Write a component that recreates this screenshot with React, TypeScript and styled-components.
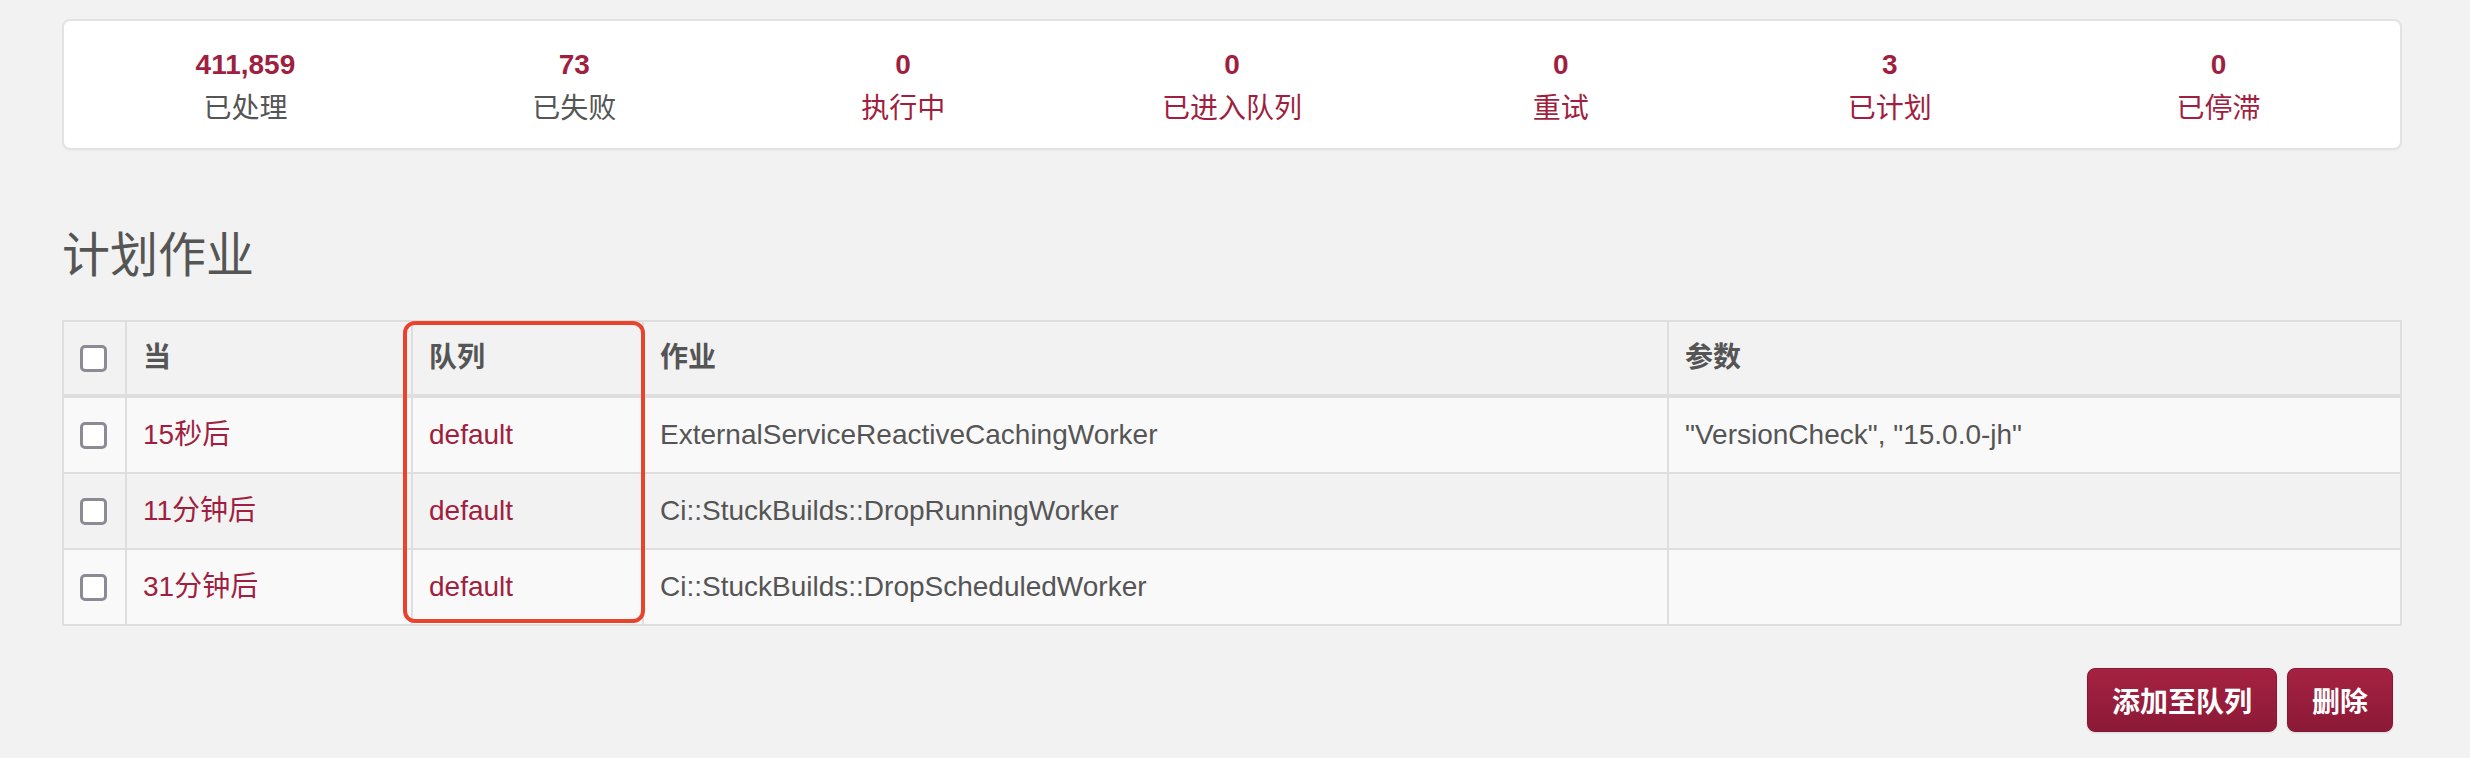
import styled, { createGlobalStyle } from 'styled-components';

const GlobalStyle = createGlobalStyle`
  html, body {
    margin: 0;
    padding: 0;
    background: #f2f2f2;
  }

  body {
    font-family: "Liberation Sans", "Noto Sans CJK SC", Arial, sans-serif;
    font-size: 28px;
    line-height: 40px;
    color: #555;
  }
`;

const RED = '#a01f40';

const Page = styled.div`
  padding: 19px 68px 40px 62px;
`;

const Summary = styled.ul`
  display: grid;
  grid-template-columns: repeat(7, 1fr);
  margin: 0;
  padding: 24px 17px 19px;
  list-style: none;
  background: #fff;
  border: 2px solid #e3e3e3;
  border-radius: 8px;
  box-shadow: 0 1px 2px rgba(0, 0, 0, 0.03);
`;

const Stat = styled.li`
  display: flex;
  flex-direction: column;
  align-items: center;
`;

const Count = styled.span`
  font-weight: 700;
  color: ${RED};
`;

const Label = styled.span<{ link?: boolean }>`
  margin-top: 4px;
  color: ${(props) => (props.link ? RED : '#555')};
`;

const Heading = styled.h3`
  margin: 79px 0 38px;
  font-size: 48px;
  line-height: 53px;
  font-weight: 400;
  color: #555;
`;

const TableWrap = styled.div`
  position: relative;
`;

const Table = styled.table`
  width: 100%;
  table-layout: fixed;
  border-collapse: collapse;
  border: 2px solid #dedede;
`;

const Th = styled.th`
  padding: 16px;
  text-align: left;
  font-weight: 700;
  color: #555;
  border: 2px solid #dedede;
  border-bottom-width: 4px;
`;

const Row = styled.tr<{ striped: boolean }>`
  background: ${(props) => (props.striped ? '#f9f9f9' : 'transparent')};
`;

const Td = styled.td<{ link?: boolean }>`
  padding: 17px 16px;
  color: ${(props) => (props.link ? RED : '#555')};
  border: 2px solid #dedede;
  white-space: nowrap;
  overflow: hidden;
`;

const Check = styled.span`
  display: block;
  width: 21px;
  height: 21px;
  background: #fff;
  border: 3px solid #8b8b96;
  border-radius: 5px;
`;

// annotation drawn over the queue column
const Highlight = styled.div`
  position: absolute;
  left: 341px;
  top: 1px;
  width: 242px;
  height: 302px;
  box-sizing: border-box;
  border: 4px solid #e9432d;
  border-radius: 12px;
  pointer-events: none;
`;

const Actions = styled.div`
  display: flex;
  justify-content: flex-end;
  gap: 10px;
  margin-top: 42px;
  padding-right: 9px;
`;

const Button = styled.button`
  height: 64px;
  padding: 0 24px;
  font-family: inherit;
  font-size: 28px;
  font-weight: 700;
  color: #fff;
  background: linear-gradient(#a62142, #8b1a37);
  border: 1px solid #861835;
  border-radius: 8px;
  box-shadow: 0 1px 2px rgba(0, 0, 0, 0.12);
`;

const stats = [
  { count: '411,859', label: '已处理', link: false },
  { count: '73', label: '已失败', link: false },
  { count: '0', label: '执行中', link: true },
  { count: '0', label: '已进入队列', link: true },
  { count: '0', label: '重试', link: true },
  { count: '3', label: '已计划', link: true },
  { count: '0', label: '已停滞', link: true },
];

const jobs = [
  { when: '15秒后', queue: 'default', job: 'ExternalServiceReactiveCachingWorker', args: '"VersionCheck", "15.0.0-jh"' },
  { when: '11分钟后', queue: 'default', job: 'Ci::StuckBuilds::DropRunningWorker', args: '' },
  { when: '31分钟后', queue: 'default', job: 'Ci::StuckBuilds::DropScheduledWorker', args: '' },
];

export default function App() {
  return (
    <Page>
      <GlobalStyle />
      <Summary>
        {stats.map((s) => (
          <Stat key={s.label}>
            <Count>{s.count}</Count>
            <Label link={s.link}>{s.label}</Label>
          </Stat>
        ))}
      </Summary>

      <Heading>计划作业</Heading>

      <TableWrap>
        <Table>
          <colgroup>
            <col style={{ width: 63 }} />
            <col style={{ width: 286 }} />
            <col style={{ width: 231 }} />
            <col style={{ width: 1025 }} />
            <col />
          </colgroup>
          <thead>
            <tr>
              <Th>
                <Check />
              </Th>
              <Th>当</Th>
              <Th>队列</Th>
              <Th>作业</Th>
              <Th>参数</Th>
            </tr>
          </thead>
          <tbody>
            {jobs.map((j, i) => (
              <Row key={j.job} striped={i % 2 === 0}>
                <Td>
                  <Check />
                </Td>
                <Td link>{j.when}</Td>
                <Td link>{j.queue}</Td>
                <Td>{j.job}</Td>
                <Td>{j.args}</Td>
              </Row>
            ))}
          </tbody>
        </Table>
        <Highlight />
      </TableWrap>

      <Actions>
        <Button>添加至队列</Button>
        <Button>删除</Button>
      </Actions>
    </Page>
  );
}
